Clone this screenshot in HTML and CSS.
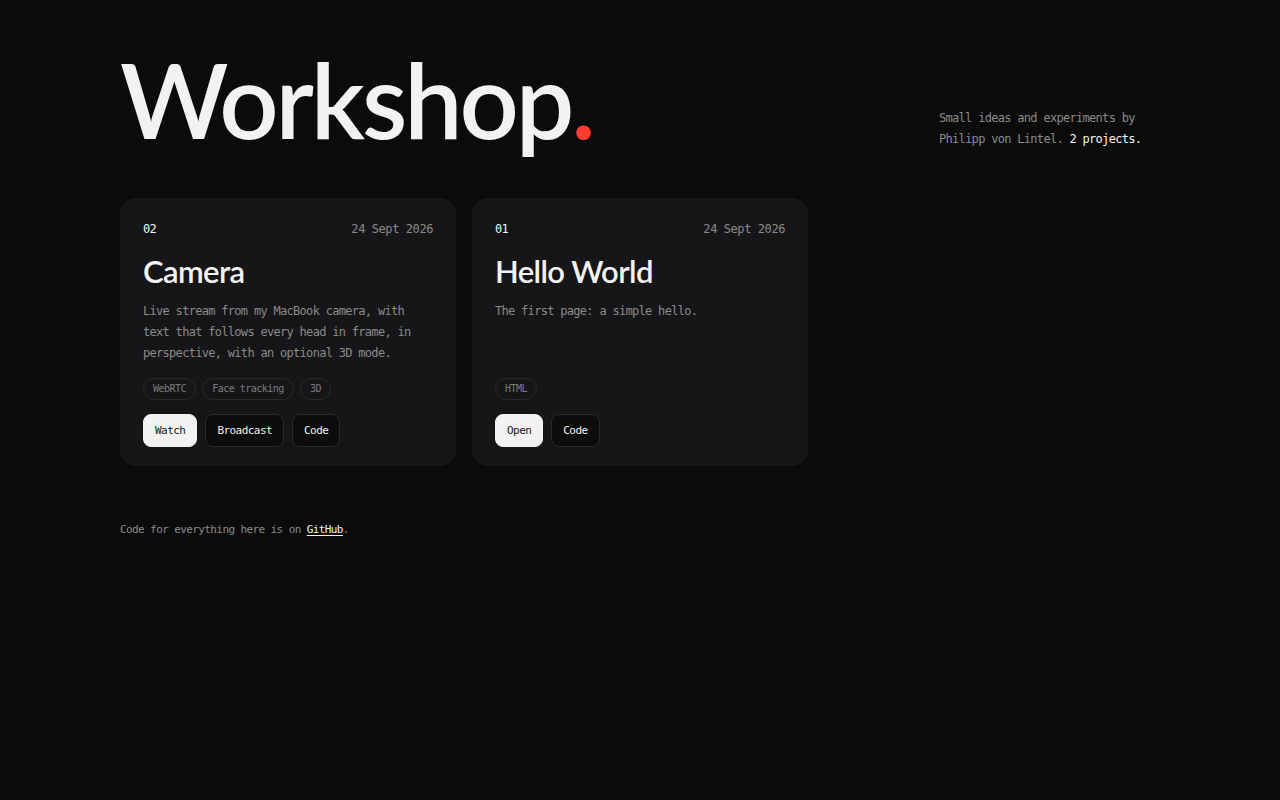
FILE: index.html
```html
<!DOCTYPE html>
<html lang="en">
<head>
<meta charset="utf-8">
<title>Workshop</title>
<link rel="stylesheet" href="styles.css">
</head>
<body>
<main class="page">
  <header class="masthead">
    <h1 class="title">Workshop<span class="dot">.</span></h1>
    <p class="intro">Small ideas and experiments by Philipp von Lintel. <strong>2 projects.</strong></p>
  </header>

  <section class="grid">
    <article class="card">
      <div class="card-meta">
        <span class="num">02</span>
        <span class="date">24 Sept 2026</span>
      </div>
      <h2 class="card-title">Camera</h2>
      <p class="card-desc">Live stream from my MacBook camera, with text that follows every head in frame, in perspective, with an optional 3D mode.</p>
      <ul class="tags">
        <li class="tag">WebRTC</li>
        <li class="tag">Face tracking</li>
        <li class="tag">3D</li>
      </ul>
      <div class="actions">
        <a class="btn btn-primary" href="#">Watch</a>
        <a class="btn" href="#">Broadcast</a>
        <a class="btn" href="#">Code</a>
      </div>
    </article>

    <article class="card">
      <div class="card-meta">
        <span class="num">01</span>
        <span class="date">24 Sept 2026</span>
      </div>
      <h2 class="card-title">Hello World</h2>
      <p class="card-desc">The first page: a simple hello.</p>
      <ul class="tags">
        <li class="tag">HTML</li>
      </ul>
      <div class="actions">
        <a class="btn btn-primary" href="#">Open</a>
        <a class="btn" href="#">Code</a>
      </div>
    </article>
  </section>

  <footer class="foot">Code for everything here is on <a href="#">GitHub</a>.</footer>
</main>
</body>
</html>
```

FILE: styles.css
```css
* {
  box-sizing: border-box;
}

html,
body {
  margin: 0;
  background: #0b0b0b;
  color: #f2f2f2;
}

body {
  font-family: "DejaVu Sans Mono", "Liberation Mono", monospace;
}

.page {
  width: 1040px;
  margin: 0 auto;
  padding-top: 42px;
}

/* Heading row */
.masthead {
  display: flex;
  justify-content: space-between;
  align-items: flex-end;
}

.title {
  margin: 0;
  font-family: "Lato", "Noto Sans", sans-serif;
  font-weight: 600;
  font-size: 104px;
  line-height: 1.1;
  letter-spacing: -0.03em;
  color: #f2f2f2;
}

.dot {
  color: #ff3b30;
}

.intro {
  width: 221px;
  margin: 0 0 6px;
  font-size: 12px;
  line-height: 21px;
  letter-spacing: -0.7px;
  color: #8a8a8a;
}

.intro strong {
  font-weight: 400;
  color: #f5f5f5;
}

/* Project cards */
.grid {
  display: grid;
  grid-template-columns: repeat(3, 1fr);
  gap: 16px;
  margin-top: 42px;
}

.card {
  display: flex;
  flex-direction: column;
  background: #161618;
  border-radius: 16px;
  padding: 21px 23px 19px;
}

.card-meta {
  display: flex;
  justify-content: space-between;
  font-size: 12px;
  line-height: 20px;
  letter-spacing: -0.7px;
}

.num {
  color: #f2f2f2;
}

.date {
  color: #8a8a8a;
  letter-spacing: -0.42px;
}

.card-title {
  margin: 12px 0 0;
  font-family: "Lato", "Noto Sans", sans-serif;
  font-weight: 600;
  font-size: 31px;
  line-height: 40px;
  letter-spacing: -0.02em;
  color: #f2f2f2;
}

.card-desc {
  flex: 1;
  margin: 10px 0 0;
  font-size: 12px;
  line-height: 21px;
  letter-spacing: -0.7px;
  color: #8a8a8a;
}

.tags {
  display: flex;
  gap: 6px;
  margin: 14px 0 0;
  padding: 0;
  list-style: none;
}

.tag {
  font-size: 10px;
  line-height: 20px;
  letter-spacing: -0.5px;
  padding: 0 9px;
  border: 1px solid #2a2a2c;
  border-radius: 999px;
  color: #7c7c7c;
}

.actions {
  display: flex;
  gap: 8px;
  margin-top: 14px;
}

.btn {
  font-size: 11px;
  line-height: 31px;
  letter-spacing: -0.55px;
  padding: 0 11px;
  border: 1px solid #2a2a2c;
  border-radius: 8px;
  background: #0c0c0c;
  color: #f2f2f2;
  text-decoration: none;
}

.btn-primary {
  background: #f2f2f2;
  border-color: #f2f2f2;
  color: #161616;
}

/* Footer note */
.foot {
  margin-top: 55px;
  font-size: 11px;
  line-height: 18px;
  letter-spacing: -0.6px;
  color: #8a8a8a;
}

.foot a {
  color: #f2f2f2;
  text-decoration: underline;
  text-underline-offset: 2px;
}
```
